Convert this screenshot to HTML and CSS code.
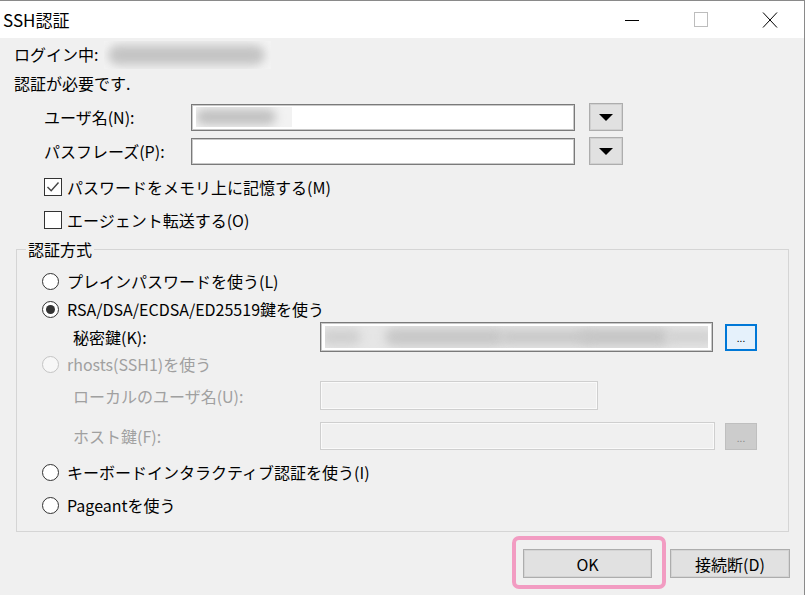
FILE: index.html
```html
<!DOCTYPE html>
<html lang="ja">
<head>
    <meta charset="UTF-8">
    <title>SSH認証</title>
    <link rel="stylesheet" href="styles.css">
</head>
<body>
    <div class="window">
        <div class="titlebar">
            <span class="title">SSH認証</span>
            <div class="controls">
                <span class="ctl">
                    <svg width="16" height="16" viewBox="0 0 16 16"><path d="M1 8.5 H15" stroke="#000" stroke-width="1"/></svg>
                </span>
                <span class="ctl">
                    <svg width="16" height="16" viewBox="0 0 16 16"><rect x="1.5" y="0.5" width="13" height="14" fill="none" stroke="#bdbdbd" stroke-width="1"/></svg>
                </span>
                <span class="ctl">
                    <svg width="16" height="16" viewBox="0 0 16 16"><path d="M1 0.5 L15 15.5 M15 0.5 L1 15.5" stroke="#000" stroke-width="1"/></svg>
                </span>
            </div>
        </div>

        <div class="content">
            <div class="line login">
                <span>ログイン中:</span>
                <span class="blur-box login-blur"><span class="blob"></span></span>
            </div>
            <div class="line msg">認証が必要です.</div>

            <div class="field-row user-row">
                <label class="field-label">ユーザ名(N):</label>
                <div class="input"><span class="blur-box user-blur"><span class="blob"></span></span></div>
                <button class="drop"><span class="tri"></span></button>
            </div>
            <div class="field-row pass-row">
                <label class="field-label">パスフレーズ(P):</label>
                <div class="input"></div>
                <button class="drop"><span class="tri"></span></button>
            </div>

            <div class="check-row first">
                <span class="checkbox">
                    <svg width="16" height="16" viewBox="0 0 16 16"><path d="M2.5 8 L6.2 11.8 L13.5 3.5" fill="none" stroke="#444" stroke-width="1.4"/></svg>
                </span>
                <span>パスワードをメモリ上に記憶する(M)</span>
            </div>
            <div class="check-row">
                <span class="checkbox"></span>
                <span>エージェント転送する(O)</span>
            </div>

            <fieldset class="group">
                <legend>認証方式</legend>

                <div class="radio-row r-plain">
                    <span class="radio"></span>
                    <span>プレインパスワードを使う(L)</span>
                </div>
                <div class="radio-row r-rsa">
                    <span class="radio checked"></span>
                    <span>RSA/DSA/ECDSA/ED25519鍵を使う</span>
                </div>
                <div class="sub-row key-row">
                    <label class="sub-label">秘密鍵(K):</label>
                    <div class="input key-input">
                        <span class="key-blur">
                            <span class="blob b1"></span>
                            <span class="blob b2"></span>
                            <span class="blob b3"></span>
                            <span class="blob b4"></span>
                            <span class="blob b5"></span>
                        </span>
                    </div>
                    <button class="browse active">...</button>
                </div>
                <div class="radio-row r-rhosts disabled">
                    <span class="radio"></span>
                    <span>rhosts(SSH1)を使う</span>
                </div>
                <div class="sub-row local-row disabled">
                    <label class="sub-label">ローカルのユーザ名(U):</label>
                    <div class="input local-input"></div>
                </div>
                <div class="sub-row host-row disabled">
                    <label class="sub-label">ホスト鍵(F):</label>
                    <div class="input host-input"></div>
                    <button class="browse">...</button>
                </div>
                <div class="radio-row r-kbd">
                    <span class="radio"></span>
                    <span>キーボードインタラクティブ認証を使う(I)</span>
                </div>
                <div class="radio-row r-pageant">
                    <span class="radio"></span>
                    <span>Pageantを使う</span>
                </div>
            </fieldset>

            <div class="buttons">
                <div class="highlight">
                    <button class="btn ok">OK</button>
                </div>
                <button class="btn disconnect">接続断(D)</button>
            </div>
        </div>
    </div>
</body>
</html>
```

FILE: styles.css
```css
body {
    margin: 0;
    font-family: "Noto Sans CJK JP", "Noto Sans", sans-serif;
    font-size: 16px;
    color: #000;
}
.window {
    width: 804px;
    height: 594px;
    border-top: 1px solid #8a8a8a;
    border-right: 1px solid #8a8a8a;
    background: #f0f0f0;
    overflow: hidden;
}

/* title bar */
.titlebar {
    height: 37px;
    background: #fff;
    display: flex;
    align-items: center;
}
.title {
    padding-left: 3px;
    font-size: 17px;
}
.controls {
    margin-left: auto;
    display: flex;
    height: 100%;
}
.ctl {
    width: 69px;
    display: flex;
    align-items: center;
    justify-content: center;
}

.content {
    padding: 2px 14px 0 14px;
}
.line {
    height: 29px;
    line-height: 29px;
    display: flex;
    align-items: center;
}
.login-blur {
    margin-left: 6px;
    width: 167px;
    height: 28px;
    background: #f3f3f3;
}
.blur-box {
    position: relative;
    display: inline-block;
    overflow: hidden;
}
.blob {
    position: absolute;
    background: #bdbdbd;
    filter: blur(5px);
    border-radius: 10px;
}
.login-blur .blob { left: 4px; right: 6px; top: 4px; bottom: 4px; background: #c4c4c4; }
.user-blur {
    width: 96px;
    height: 20px;
    margin: 2px 0 0 4px;
    background: #f2f2f2;
}
.user-blur .blob { left: 0; right: 16px; top: 2px; bottom: 2px; background: #c2c2c2; }

/* user / passphrase */
.field-row {
    display: flex;
    align-items: center;
    height: 28px;
}
.user-row { margin-top: 5px; }
.pass-row { margin-top: 6px; }
.field-label {
    margin-left: 30px;
    width: 147px;
}
.input {
    box-sizing: border-box;
    width: 384px;
    height: 27px;
    background: #fff;
    border: 1px solid #7a7a7a;
    box-shadow: inset 0 0 0 1px #c9c9c9;
}
.drop {
    box-sizing: border-box;
    margin-left: 14px;
    width: 34px;
    height: 28px;
    background: #e1e1e1;
    border: 1px solid #adadad;
    box-shadow: inset 0 0 0 1px #d0d0d0;
    padding: 0;
    display: flex;
    align-items: center;
    justify-content: center;
}
.tri {
    width: 0;
    height: 0;
    border-left: 7px solid transparent;
    border-right: 7px solid transparent;
    border-top: 7px solid #000;
}

/* checkboxes */
.check-row {
    height: 33px;
    display: flex;
    align-items: center;
    padding-left: 30px;
}
.check-row.first { margin-top: 5px; }
.checkbox {
    box-sizing: border-box;
    width: 18px;
    height: 18px;
    border: 1px solid #333;
    background: #fff;
    margin-right: 5px;
    display: flex;
    align-items: center;
    justify-content: center;
}

/* group box */
.group {
    box-sizing: border-box;
    width: 773px;
    margin: 0 0 0 2px;
    padding: 4px 0 11px 0;
    border: 1px solid #d5d5d5;
}
.group legend {
    margin-left: 9px;
    padding: 0 2px;
    line-height: 26px;
}
.radio-row {
    display: flex;
    align-items: center;
    height: 30px;
    padding-left: 25px;
}
.radio {
    box-sizing: border-box;
    width: 17px;
    height: 17px;
    border: 1px solid #333;
    border-radius: 50%;
    background: #fff;
    margin-right: 8px;
    display: flex;
    align-items: center;
    justify-content: center;
}
.radio.checked::after {
    content: "";
    width: 9px;
    height: 9px;
    border-radius: 50%;
    background: #333;
}
.r-rsa { height: 26px; }
.r-rhosts { height: 20px; margin-top: 2px; }
.r-kbd { margin-top: 7px; }
.r-pageant { margin-top: 3px; }

.sub-row {
    display: flex;
    align-items: center;
    padding-left: 56px;
}
.sub-label { width: 247px; }
.key-row { height: 30px; }
.local-row { height: 29px; margin-top: 7px; }
.host-row { height: 28px; margin-top: 12px; }

.key-input {
    width: 393px;
    height: 30px;
    position: relative;
    overflow: hidden;
}
.key-blur {
    position: absolute;
    left: 4px;
    right: 4px;
    top: 3px;
    bottom: 3px;
    background: #e6e6e6;
    overflow: hidden;
}
.key-blur .b1 { left: -4px; width: 40px; top: 3px; bottom: 3px; background: #d0d0d0; }
.key-blur .b2 { left: 60px; width: 120px; top: 2px; bottom: 2px; background: #c8c8c8; }
.key-blur .b3 { left: 175px; width: 90px; top: 3px; bottom: 3px; background: #cacaca; }
.key-blur .b4 { left: 255px; width: 90px; top: 2px; bottom: 2px; background: #c6c6c6; }
.key-blur .b5 { left: 340px; width: 50px; top: 4px; bottom: 4px; background: #d2d2d2; }

.local-input { width: 278px; height: 29px; }
.host-input { width: 395px; height: 28px; }

.disabled { color: #a0a0a0; }
.disabled .radio { border-color: #c4c4c4; background: #f7f7f7; }
.disabled .input {
    background: #f0f0f0;
    border-color: #cfcfcf;
    box-shadow: inset 0 0 0 1px #fafafa;
}

.browse {
    box-sizing: border-box;
    width: 32px;
    height: 27px;
    padding: 0 0 6px 0;
    font-family: "Noto Sans CJK JP", sans-serif;
    font-size: 10px;
    line-height: 1;
    display: flex;
    align-items: flex-end;
    justify-content: center;
}
.key-row .browse {
    margin-left: 12px;
    background: #e5f1fb;
    border: 2px solid #0078d7;
    color: #000;
}
.host-row .browse {
    margin-left: 10px;
    background: #cccccc;
    border: 1px solid #bfbfbf;
    color: #8a8a8a;
}

/* bottom buttons */
.buttons {
    display: flex;
    justify-content: flex-end;
    align-items: flex-start;
    margin-top: 4px;
}
.highlight {
    border: 4px solid #f29cc2;
    border-radius: 7px;
    padding: 9px 10px 7px 7px;
}
.btn {
    box-sizing: border-box;
    height: 29px;
    background: #e1e1e1;
    border: 1px solid #adadad;
    box-shadow: inset 0 0 0 1px #d4d4d4;
    font-family: "Noto Sans CJK JP", "Noto Sans", sans-serif;
    font-size: 16px;
    color: #000;
    padding: 0;
}
.ok { width: 129px; }
.disconnect {
    width: 120px;
    margin: 13px 0 0 4px;
}
```
